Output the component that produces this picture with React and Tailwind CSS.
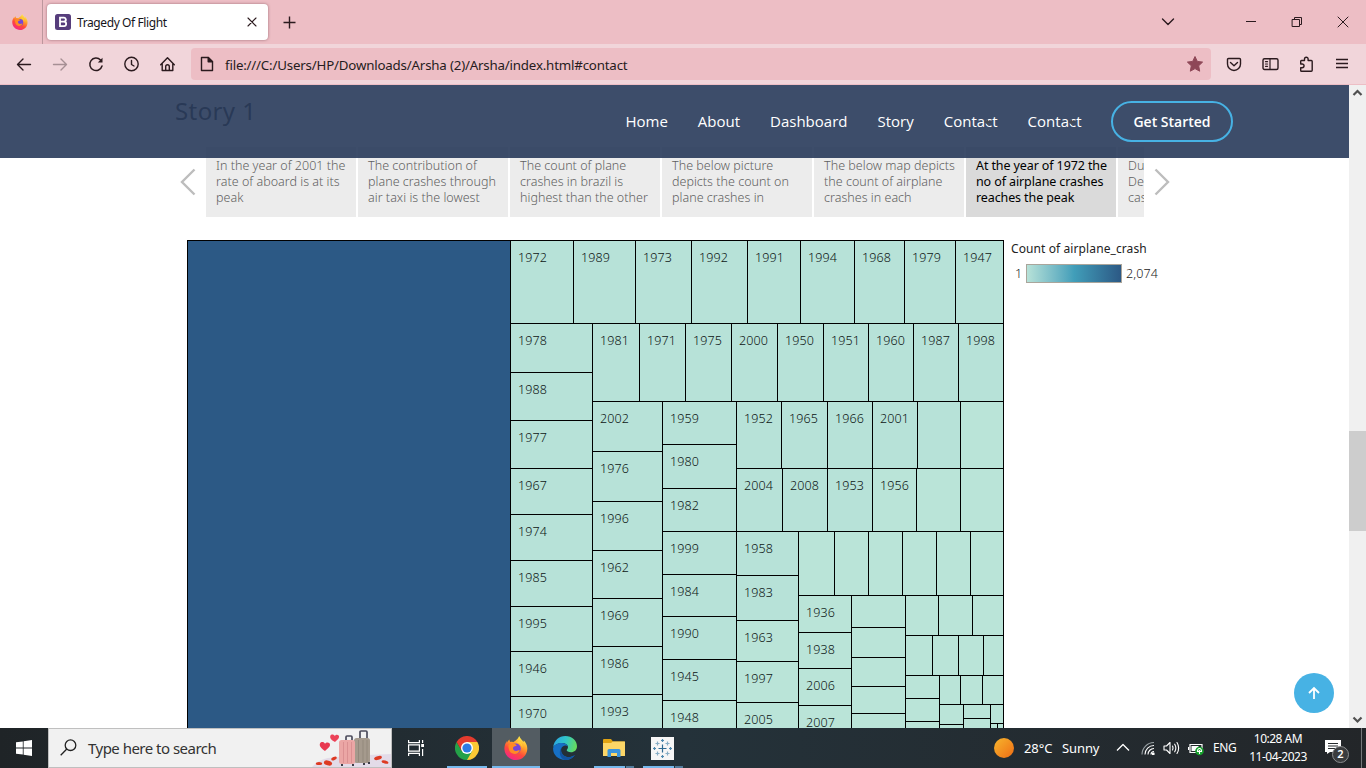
import React from 'react';

const UI = "font-['Noto_Sans','Open_Sans',sans-serif]";

/* ---------- treemap data: line positions in chart pixels ---------- */
const cells = [];
const row = (y0, y1, xs, labels = []) => {
  for (let i = 0; i < xs.length - 1; i++) cells.push([xs[i], y0, xs[i + 1], y1, labels[i]]);
};
const col = (x0, x1, ys, labels = []) => {
  for (let i = 0; i < ys.length - 1; i++) cells.push([x0, ys[i], x1, ys[i + 1], labels[i]]);
};
row(0, 83, [323, 386, 448, 504, 560, 613, 667, 717, 768, 816], [1972, 1989, 1973, 1992, 1991, 1994, 1968, 1979, 1947]);
col(323, 405, [83, 132, 180, 228, 274, 320, 366, 411, 456, 500], [1978, 1988, 1977, 1967, 1974, 1985, 1995, 1946, 1970]);
row(83, 161, [405, 452, 498, 544, 590, 636, 681, 726, 771, 816], [1981, 1971, 1975, 2000, 1950, 1951, 1960, 1987, 1998]);
col(405, 475, [161, 211, 261, 310, 358, 406, 454, 500], [2002, 1976, 1996, 1962, 1969, 1986, 1993]);
col(475, 549, [161, 204, 248, 291, 334, 376, 419, 460, 500], [1959, 1980, 1982, 1999, 1984, 1990, 1945, 1948]);
row(161, 228, [549, 594, 640, 685, 730, 773, 816], [1952, 1965, 1966, 2001]);
row(228, 291, [549, 595, 640, 685, 729, 773, 816], [2004, 2008, 1953, 1956]);
col(549, 611, [291, 335, 380, 421, 462, 500], [1958, 1983, 1963, 1997, 2005]);
row(291, 355, [611, 647, 681, 715, 749, 783, 816]);
col(611, 664, [355, 392, 428, 465, 500], [1936, 1938, 2006, 2007]);
col(664, 718, [355, 387, 417, 446, 473, 500]);
row(355, 395, [718, 751, 785, 816]);
row(395, 435, [718, 745, 771, 796, 816]);
col(718, 752, [435, 458, 481, 500]);
row(435, 464, [752, 773, 795, 816]);
col(752, 776, [464, 484, 500]);
col(776, 803, [464, 478, 500]);
row(464, 483, [803, 816]);
row(483, 500, [803, 810, 816]);

function Treemap() {
  return (
    <svg width="817" height="488" className="block shrink-0 overflow-hidden">
      <rect x="0.5" y="0.5" width="323" height="520" fill="#2c5985" stroke="#000" />
      {cells.map(([x0, y0, x1, y1, label], i) => (
        <g key={i}>
          <rect x={x0 + 0.5} y={y0 + 0.5} width={x1 - x0} height={y1 - y0} fill={x0 + y0 > 900 ? '#bae4d8' : '#b7e2d8'} stroke="#000" />
          {label && (
            <text x={x0 + 8} y={y0 + 22} textLength="29" fontSize="12.5" fill="#0c1413" className="font-['Noto_Sans',sans-serif] font-light">
              {label}
            </text>
          )}
        </g>
      ))}
    </svg>
  );
}

function FirefoxIcon({ size, id }) {
  return (
    <svg width={size} height={size} viewBox="0 0 24 24" className="shrink-0">
      <defs>
        <linearGradient id={id + 'a'} x1="0.8" y1="0.05" x2="0.3" y2="1">
          <stop offset="0" stopColor="#fff44f" />
          <stop offset="0.35" stopColor="#ffa12b" />
          <stop offset="0.65" stopColor="#ff4a3a" />
          <stop offset="1" stopColor="#f4238c" />
        </linearGradient>
      </defs>
      <path d="M15.2 0c1 2.500 3 4 4.200 6 .4-.5.4-1.200.3-1.700 2.200 2.400 3.800 5.200 3.600 8.700-.3 6.200-5 11-11.300 11S.6 19.200.4 12.900c-.1-3 .9-5.600 2.400-7.900V7c.6-1.500 1.500-2.600 2.700-3.600 0 .9.300 2 .9 2.500 1-.1 2 0 2.800.4C11 4.700 13.500 4 15.200 0z" fill={`url(#${id}a)`} />
      <circle cx="11.800" cy="12.600" r="5" fill="#7446d8" />
      <path d="M4.500 9c2-1.200 3.700-2.200 6-1.300 1 .4 1.800 1 2.300 1.700-1 .9-3 .7-3.700 2-.5 2 1 3.600 3 3.600 1.500 0 2.500-.9 3.700-.6-1 2.800-4 4.200-7 3.200-3.200-1-4.600-4.600-4.300-8.600z" fill="#ff8b24" />
      <path d="M12.500 6.500c3.300.2 5.600 2.500 5.600 5.600 1-2.500-.4-5.800-2.900-7.400z" fill="#ffce3a" />
    </svg>
  );
}

const stroke = { fill: 'none', stroke: '#2b1a1e', strokeWidth: 1.4, strokeLinecap: 'round', strokeLinejoin: 'round' };
const Ico = ({ children, className = '', ...p }) => (
  <svg width="16" height="16" viewBox="0 0 16 16" {...stroke} {...p} className={'shrink-0 ' + className}>
    {children}
  </svg>
);

function TabBar() {
  return (
    <div className="flex h-11 shrink-0 items-center bg-[#edbec5]">
      <div className="flex h-11 w-[43px] items-center border-r border-[#bc979d] pl-[12px]">
        <FirefoxIcon size={16} id="ft" />
      </div>
      <div className="ml-[4px] flex h-9 w-[221px] items-center rounded bg-white pl-2 pr-[10px] shadow-[0_0_3px_rgba(90,40,50,0.55)]">
        <svg width="16" height="16" viewBox="0 0 16 16" className="shrink-0">
          <rect width="16" height="16" rx="2.500" fill="#563d7c" />
          <path d="M5 3.700h3.600a2 2 0 0 1 .5 4 2.200 2.200 0 0 1-.3 4.400H5zM5 7.700h4" fill="none" stroke="#fff" strokeWidth="1.800" />
        </svg>
        <span className="ml-[6px] mt-[2px] whitespace-nowrap text-[12px] tracking-[-0.4px] text-[#15141a]">Tragedy Of Flight</span>
        <Ico className="ml-auto" width="12" height="12" viewBox="0 0 12 12" strokeWidth="1.100">
          <path d="M2 2l8 8M10 2l-8 8" />
        </Ico>
      </div>
      <Ico className="ml-[13px]" strokeLinecap="butt">
        <path d="M2.500 8.500h12M8.500 2.500v12" />
      </Ico>
      <div className="ml-auto flex items-center">
        <Ico>
          <path d="M2.500 5l5.500 5.500L13.500 5" />
        </Ico>
        <Ico className="ml-[67px]" strokeWidth="1" strokeLinecap="butt">
          <path d="M3 7.500h10" />
        </Ico>
        <Ico className="ml-[30px]" strokeWidth="1" strokeLinejoin="miter">
          <path d="M3.500 5.500h7v7h-7zM5.500 5.500v-2h7v7h-2" />
        </Ico>
        <Ico className="ml-[30px] mr-[15px]" strokeWidth="1">
          <path d="M3 3l10 10M13 3L3 13" />
        </Ico>
      </div>
    </div>
  );
}

function Toolbar() {
  return (
    <div className="flex h-[41px] shrink-0 items-center border-b border-[#edbec5] bg-[#f1d5da] pl-4">
      <Ico>
        <path d="M14.500 8.500h-13M7 3L1.500 8.500 7 14" />
      </Ico>
      <Ico className="ml-5" stroke="#a68f94">
        <path d="M1.500 8.500h13M9 3l5.500 5.500L9 14" />
      </Ico>
      <Ico className="ml-5" strokeWidth="1.500">
        <path d="M14 10A6.200 6.200 0 1 1 12.500 4" />
        <path d="M14.500 1.800v4.700H9.800z" fill="#2b1a1e" stroke="none" />
      </Ico>
      <Ico className="ml-5">
        <circle cx="7.500" cy="8" r="6.700" />
        <path d="M7.500 4.500v4L10 10" />
      </Ico>
      <Ico className="ml-5">
        <path d="M.7 8.700L7.500 1.700l6.800 7M2.200 7.500v7h10.600v-7M5.700 14.300v-3.800q0-1.800 1.800-1.800t1.800 1.800v3.800" />
      </Ico>
      <div className="ml-[15px] flex h-8 w-[1020px] items-center rounded bg-[#edbec5] pl-[8px] pr-[7px]">
        <Ico>
          <path d="M2.500 1.500h6.700l4.300 4.300v8.700h-11z" />
          <path d="M9.200 1.500v4.300h4.300z" fill="#2b1a1e" />
        </Ico>
        <span className="ml-[10px] mt-[3px] whitespace-nowrap text-[13.300px] tracking-[-0.185px] text-[#261c20]">
          file:///C:/Users/HP/Downloads/Arsha (2)/Arsha/index.html#contact
        </span>
        <svg width="18" height="18" viewBox="0 0 18 18" className="ml-auto shrink-0">
          <path d="M9 1.500l2.300 4.900 5.300.7-3.900 3.700 1 5.400L9 13.600l-4.700 2.600 1-5.400L1.400 7.100l5.300-.7z" fill="#8e4757" stroke="#8e4757" strokeWidth="1" strokeLinejoin="round" />
        </svg>
      </div>
      <Ico className="ml-[15px]">
        <path d="M1.500 3.500q0-1 1-1h11q1 0 1 1V8a6.500 6.500 0 0 1-13 0zM4.500 6.500L8 9.700l3.500-3.200" />
      </Ico>
      <Ico className="ml-[20px]" width="17" viewBox="0 0 17 16">
        <rect x="1" y="2.700" width="15" height="10.800" rx="1.500" />
        <path d="M8 3v10.500M3.500 5.700h2M3.500 8h2M3.500 10.300h2" strokeWidth="1.200" />
      </Ico>
      <Ico className="ml-[19px]">
        <path d="M2.700 8V5.300q0-.8.800-.8h3V3a1.800 1.800 0 0 1 3.600 0v1.500h3.200q.9 0 .9.900v8.900q0 .9-.9.900H3.500q-.8 0-.8-.8V11.700h1.500a1.800 1.800 0 0 0 0-3.700z" />
      </Ico>
      <Ico className="ml-[20px]" strokeLinecap="butt">
        <path d="M2 3.500h12M2 7.500h12M2 11.500h12" />
      </Ico>
    </div>
  );
}

const navItems = ['Home', 'About', 'Dashboard', 'Story', 'Contact', 'Contact'];

function SiteHeader() {
  return (
    <header className="absolute inset-x-0 top-0 flex h-[73px] items-center justify-end bg-[#283a5a]/90 pr-[116px] font-['Open_Sans',sans-serif] text-white">
      <nav className="flex gap-[30px] text-[15px] font-medium">
        {navItems.map((item, i) => (
          <a key={i} className="relative">
            {item}
            {i > 3 && (
              <svg width="8" height="6" viewBox="0 0 8 6" className="absolute left-[40px] top-[9px]">
                <path d="M0 3L4 0v2h3v2H4v2z" fill="#444a55" />
              </svg>
            )}
          </a>
        ))}
      </nav>
      <a className="ml-[29.500px] flex h-[41px] w-[122px] items-center justify-center rounded-full border-2 border-[#47b2e4] text-[14px] font-semibold">
        Get Started
      </a>
    </header>
  );
}

const stories = [
  ['In the year of 2001 the', 'rate of aboard is at its', 'peak'],
  ['The contribution of', 'plane crashes through', 'air taxi is the lowest'],
  ['The count of plane', 'crashes in brazil is', 'highest than the other'],
  ['The below picture', 'depicts the count on', 'plane crashes in'],
  ['The below map depicts', 'the count of airplane', 'crashes in each'],
  ['At the year of 1972 the', 'no of airplane crashes', 'reaches the peak'],
  ['Du', 'Dec', 'cas'],
];

function StoryStrip() {
  return (
    <div className="flex h-[70px] items-center pl-[180px]">
      <svg width="16" height="28" viewBox="0 0 16 28" className="shrink-0">
        <path d="M14.500 1.500L2 14l12.500 12.500" fill="none" stroke="#bdbdbd" strokeWidth="2.400" />
      </svg>
      <div className="ml-[10px] flex w-[938px] gap-[2px] overflow-hidden">
        {stories.map((lines, i) => (
          <div
            key={i}
            className={
              'h-[70px] w-[150px] shrink-0 whitespace-nowrap pl-[10px] pt-[11px] text-[12.500px] leading-4 ' +
              (i === 5 ? 'bg-[#dadada] tracking-[-0.11px] text-black' : 'bg-[#ececec] font-light tracking-[0.020px] text-[#5f5f5f]')
            }
          >
            {lines.map((l) => (
              <div key={l}>{l}</div>
            ))}
          </div>
        ))}
      </div>
      <svg width="16" height="28" viewBox="0 0 16 28" className="ml-[10px] shrink-0">
        <path d="M1.500 1.500L14 14 1.500 26.500" fill="none" stroke="#bdbdbd" strokeWidth="2.400" />
      </svg>
    </div>
  );
}

function Legend() {
  return (
    <div className="ml-[7px] text-[#333]">
      <div className="whitespace-nowrap text-[12px] leading-[18px] tracking-[0.1px] text-[#222]">Count of airplane_crash</div>
      <div className="mt-[6px] flex items-center pl-[4px] text-[12.500px] font-light leading-[19px] text-[#222]">
        <span className="w-[11px]">1</span>
        <div className="h-[19px] w-[96px] border border-[#aaa59b] bg-linear-to-r from-[#b7e2d8] via-[#419eb9] to-[#2c5985]" />
        <span className="ml-[4px] tracking-[0.1px]">2,074</span>
      </div>
    </div>
  );
}

function Scrollbar() {
  return (
    <div className="flex w-[17px] shrink-0 flex-col items-center bg-[#f0f0f0]">
      <svg width="17" height="17" viewBox="0 0 17 17">
        <path d="M4.500 10l4-4 4 4" fill="none" stroke="#505050" strokeWidth="2.200" />
      </svg>
      <div className="mt-[329px] h-[100px] w-full bg-[#cdcdcd]" />
      <svg width="17" height="17" viewBox="0 0 17 17" className="mt-auto">
        <path d="M4.500 6.500l4 4 4-4" fill="none" stroke="#505050" strokeWidth="2.200" />
      </svg>
    </div>
  );
}

function Luggage() {
  return (
    <svg width="79" height="38" viewBox="0 0 79 38" className="shrink-0">
      <path d="M0 38q6-7 16-9 20-3 40-3l23-1v13z" fill="#e3dbe8" />
      <path d="M34 12V8q0-1 1-1h4q1 0 1 1v4M48 9V3q0-1 1-1h5q1 0 1 1v6" fill="none" stroke="#4c4c5c" strokeWidth="1.700" />
      <rect x="42" y="9" width="16" height="25" rx="2.500" fill="#a59a8d" />
      <path d="M46.500 11v22M51 11v22M55 11v22" stroke="#93897d" />
      <rect x="27" y="11" width="16" height="24" rx="2.500" fill="#eba6a5" />
      <path d="M31.500 13v21M35.500 13v21M39.500 13v21" stroke="#db9092" />
      <path d="M30 35v2M41 35v2M52 34v2M57 33v2" stroke="#3d3d48" strokeWidth="2" />
      <path d="M13 22c-4-3-6-5-5-7.500 1-2 4-2 5 .3 1.500-2 5-1.500 5 1 0 2.500-3 4-5 6.200z" fill="#e8384f" />
      <path d="M23 13c-4-2-5.500-4-4.700-6.200.9-1.800 3.500-1.800 4.500.2 1.200-2 4.300-1.500 4.300.8 0 2-2.600 3.400-4.100 5.200z" fill="#ec4258" />
      <g fill="#dd3a22">
        <ellipse cx="7" cy="34.500" rx="3.200" ry="1.600" />
        <ellipse cx="16" cy="34" rx="4.200" ry="2.400" transform="rotate(15 16 34)" />
        <ellipse cx="22" cy="29.500" rx="3" ry="1.600" transform="rotate(-25 22 29.500)" />
        <ellipse cx="66" cy="29" rx="4" ry="1.800" transform="rotate(-15 66 29)" />
        <ellipse cx="73" cy="33" rx="3.500" ry="1.500" transform="rotate(15 73 33)" />
      </g>
    </svg>
  );
}

function AppSlot({ children, className = '', bar }) {
  return (
    <div className={'flex h-10 shrink-0 flex-col items-center ' + className}>
      <div className="flex h-[38px] items-center pt-[2px]">{children}</div>
      {bar}
    </div>
  );
}

const Bar = ({ split }) =>
  split ? (
    <div className="flex h-[2px] w-full">
      <div className="w-[31px] bg-[#76b9ed]" />
      <div className="ml-px w-[8px] bg-[#537c9c]" />
    </div>
  ) : (
    <div className="h-[2px] w-full bg-[#76b9ed]" />
  );

function Taskbar() {
  return (
    <div className="flex h-10 shrink-0 items-center bg-linear-to-r from-[#1f2427] via-[#24323a] to-[#232629] text-white">
      <div className="flex w-12 justify-center">
        <svg width="16" height="16" viewBox="0 0 16 16" fill="#fff">
          <path d="M0 2.300l6.800-.9v6.200H0zM7.600 1.200L16 0v7.600H7.600zM0 8.400h6.800v6.200L0 13.700zM7.600 8.400H16V16l-8.400-1.200z" />
        </svg>
      </div>
      <div className="flex h-10 w-[344px] items-center border border-[#bfbfbf] bg-[#f1f1f1] pl-[11px]">
        <svg width="17" height="17" viewBox="0 0 17 17" fill="none" stroke="#222" strokeWidth="1.300" className="-mt-[1px]">
          <circle cx="10.500" cy="6.200" r="5.300" />
          <path d="M6.800 10L.7 16.300" />
        </svg>
        <span className="ml-[11px] whitespace-nowrap text-[15px] tracking-[-0.520px] text-[#333]">Type here to search</span>
        <div className="ml-auto"><Luggage /></div>
      </div>
      <svg width="16" height="16" viewBox="0 0 16 16" fill="none" stroke="#fff" strokeWidth="1.200" className="ml-[16px] shrink-0">
        <path d="M.6 0v2.600h10.800V0M.6 16v-2.600h10.800V16M.6 4.800h10.800v6.400H.6zM14.600 0v3M14.600 9v7" />
        <path d="M13.200 4h2.800v3h-2.800z" fill="#fff" stroke="none" />
      </svg>
      <AppSlot className="ml-[23px] w-10" bar={<Bar />}>
        <svg width="24" height="24" viewBox="0 0 24 24">
          <path d="M12 12V6h10.400A12 12 0 0 1 12 24z" fill="#fcc934" />
          <path d="M12 12l5.200 3L12 24A12 12 0 0 1 1.600 6l5.200 9z" fill="#24a148" />
          <path d="M1.600 6A12 12 0 0 1 22.400 6H12v6l-5.200 3z" fill="#e33b2e" />
          <circle cx="12" cy="12" r="6" fill="#fff" />
          <circle cx="12" cy="12" r="4.600" fill="#2c7be5" />
        </svg>
      </AppSlot>
      <AppSlot className="ml-[5px] w-12 bg-[#535c62]" bar={<Bar />}>
        <FirefoxIcon size={24} id="fb" />
      </AppSlot>
      <AppSlot className="ml-[5px] w-10">
        <svg width="24" height="24" viewBox="0 0 24 24">
          <defs>
            <linearGradient id="eg" x1="0" y1="0.300" x2="1" y2="0.500">
              <stop offset="0" stopColor="#2aa5e4" />
              <stop offset="0.500" stopColor="#31c6c8" />
              <stop offset="1" stopColor="#67dc5c" />
            </linearGradient>
          </defs>
          <path d="M.2 11C1 4.500 6 0 12.300 0 19 0 24 4.700 24 10.200c0 3.800-2.700 6-6 6-2.500 0-4.300-.8-4.300-1.900 0-.8 1.300-1.200 1.300-3.200C15 8.700 12.500 7 9 7 5 7 1.700 8.800.2 11z" fill="url(#eg)" />
          <path d="M.1 12C.8 9 4.500 7 8.800 7c3.200 0 5.600 1.400 6.200 3.500-1.200-1.300-3.500-1.500-5.200-.1-3.800 3-1.500 9.600 4.200 10.600 2.700.5 5.300-.3 8-2C20 22 16.300 24 12.200 24 5.200 24-.4 18.700.1 12z" fill="#1670c5" />
          <path d="M8.500 11.800c-1.500 5 2.600 9.300 7.500 9.300 2.200 0 4-.8 6-2.100-2.600 4-7 5.500-10.500 4.900C6.500 22 5.500 15.500 8.500 11.800z" fill="#12539f" />
        </svg>
      </AppSlot>
      <AppSlot className="ml-[9px] w-10" bar={<Bar split />}>
        <svg width="22" height="18" viewBox="0 0 22 18">
          <path d="M0 1q0-1 1-1h7l2 2.500h11q1 0 1 1V17H0z" fill="#e0a313" />
          <path d="M0 4h8l2-1.500h12V17H0z" fill="#fcd667" />
          <path d="M4.500 18v-6.500q0-1.500 1.500-1.500h10q1.500 0 1.500 1.500V18h-3.500v-4h-6v4z" fill="#3a94dc" />
        </svg>
      </AppSlot>
      <AppSlot className="ml-[9px] w-10" bar={<Bar split />}>
        <svg width="23" height="23" viewBox="0 0 23 23" fill="none" stroke="#4d88ad" strokeWidth="1.200" className="mr-[2px]">
          <rect width="23" height="23" fill="#f6f6f6" stroke="none" />
          <path d="M7.500 11.500h8M11.500 7.500v8" stroke="#2f6a92" />
          <path d="M11.500 2v3M10 3.500h3M11.500 18v3M10 19.500h3M2 11.500h3M3.500 10v3M18 11.500h3M19.500 10v3" />
          <path d="M6.500 4.500v4M4.500 6.500h4M16.500 4.500v4M14.500 6.500h4M6.500 14.500v4M4.500 16.500h4M16.500 14.500v4M14.500 16.500h4" stroke="#86adc6" />
        </svg>
      </AppSlot>
      <div className="ml-auto flex items-center">
        <div className="h-5 w-5 rounded-full bg-linear-to-br from-[#f5b52d] to-[#ee6b14]" />
        <span className="ml-[10px] w-[38px] whitespace-nowrap pt-[2px] text-[13px] tracking-[-0.1px]">28°C</span>
        <span className="w-[44px] whitespace-nowrap pt-[2px] text-[13px] tracking-[-0.1px]">Sunny</span>
        <Ico stroke="#fff" strokeWidth="1.300" className="ml-[9px]" strokeLinecap="butt">
          <path d="M2 10.500l6-6 6 6" />
        </Ico>
        <Ico stroke="#fff" strokeWidth="1.100" className="ml-[9px]" strokeLinecap="butt">
          <path d="M2 14.500A12 12 0 0 1 14 2.500" stroke="#9aa2a6" />
          <path d="M5 14.500a9 9 0 0 1 9-9M8 14.500a6 6 0 0 1 6-6M11 14.500a3 3 0 0 1 3-3" />
          <path d="M12.500 13h1.500v1.500h-1.500z" fill="#fff" />
        </Ico>
        <Ico stroke="#fff" strokeWidth="1.100" className="ml-[7px]" width="17" viewBox="0 0 17 16">
          <path d="M1 6h2.500L7 2.500v11L3.500 10H1zM9.500 6q1 2 0 4M11.700 4.200q2.300 3.800 0 7.600M14 2.500q3.300 5.500 0 11" />
        </Ico>
        <svg width="17" height="16" viewBox="0 0 17 16" className="ml-[8px] shrink-0">
          <path d="M2 4.500h12v8H2zM.5 7v3" fill="none" stroke="#fff" strokeWidth="1.200" />
          <path d="M3.500 6h7v5h-7z" fill="#fff" />
          <circle cx="11.500" cy="11" r="4.300" fill="#16a02c" />
          <path d="M11.500 14V10M9.500 11.500q0-3 2-3t2 3z" fill="none" stroke="#fff" strokeWidth="1.100" />
        </svg>
        <span className="ml-[8px] w-[24px] text-[12px] tracking-[-0.45px]">ENG</span>
        <div className="ml-[8px] flex w-[66px] flex-col items-center whitespace-nowrap text-[12px] leading-[18px] tracking-[-0.5px]">
          <span>10:28 AM</span>
          <span>11-04-2023</span>
        </div>
        <div className="relative ml-[14px] h-6 w-[36px]">
          <svg width="17" height="18" viewBox="0 0 17 18">
            <path d="M0 4h16v12H5l-3 2v-2H0z" fill="#fff" />
            <path d="M3 7.500h10M3 10h10M3 12.500h7" stroke="#272b2e" />
          </svg>
          <span className="absolute left-[7px] top-[10px] flex h-[17px] w-[17px] items-center justify-center rounded-full border border-[#8b8d8f] bg-[#3a3c3e] text-[11px] font-semibold">2</span>
        </div>
        <div className="h-10 w-[5px] border-l border-[#75787a]" />
      </div>
    </div>
  );
}

export default function App() {
  return (
    <div className={`flex h-[768px] w-[1366px] flex-col overflow-hidden bg-white ${UI}`}>
      <TabBar />
      <Toolbar />
      <div className="flex min-h-0 flex-1">
        <main className="relative min-w-0 flex-1 overflow-hidden bg-white">
          <h1 className="h-[62px] pl-[175px] pt-[10px] text-[24px] leading-8 tracking-[0.4px] text-[#333]">Story 1</h1>
          <StoryStrip />
          <div className="mt-[23px] flex h-[488px] pl-[187px]">
            <Treemap />
            <Legend />
          </div>
          <SiteHeader />
          <button className="absolute bottom-[15px] right-[15px] flex h-10 w-10 items-center justify-center rounded-full bg-[#47b2e4]">
            <svg width="14" height="14" viewBox="0 0 14 14" fill="none" stroke="#fff" strokeWidth="1.800">
              <path d="M7 13V2M2 7L7 2l5 5" />
            </svg>
          </button>
        </main>
        <Scrollbar />
      </div>
      <Taskbar />
    </div>
  );
}
